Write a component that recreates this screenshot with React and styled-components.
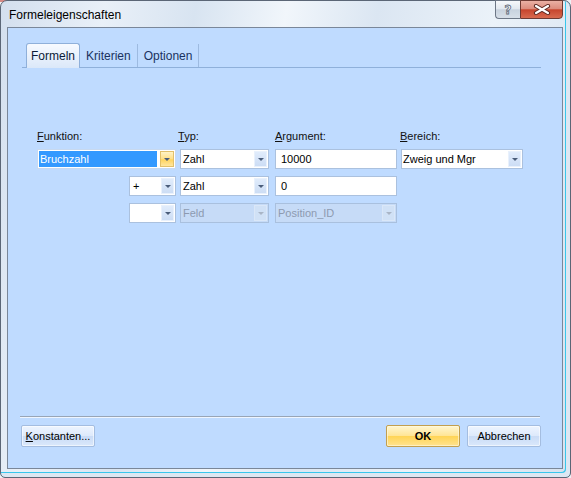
import React from 'react';
import styled, { createGlobalStyle, css } from 'styled-components';

const Global = createGlobalStyle`
  html, body { margin: 0; padding: 0; }
  body {
    width: 571px; height: 478px; overflow: hidden;
    background: linear-gradient(#d68a86, #d68a86) 0 0 / 190px 2px no-repeat, #eef1f5;
    font-family: "Liberation Sans", Arial, sans-serif;
  }
  * { box-sizing: border-box; }
`;

const Window = styled.div`
  width: 571px; height: 478px;
  border: 1px solid #5b6676;
  border-radius: 7px 7px 5px 5px;
  background: linear-gradient(100deg, #d3dfee 0%, #e9f0f8 16%, #d8e4f1 30%, #f1f6fb 44%, #dbe6f2 58%, #ebf2f9 76%, #d6e2ef 100%);
  box-shadow: inset -4px -4px 0 0 #dde7f2, inset -5px -5px 0 0 #38c6ec;
  display: flex;
  flex-direction: column;
`;

const TitleBar = styled.div`
  height: 26px;
  display: flex;
  align-items: flex-start;
`;

const Title = styled.div`
  flex: 1;
  padding: 7px 0 0 8px;
  font-size: 12px;
  line-height: 15px;
  color: #000;
`;

const CaptionButtons = styled.div`
  display: flex;
  margin: -1px 7px 0 0;
`;

const HelpButton = styled.div`
  width: 25px; height: 19px;
  border: 1px solid #6d7786;
  border-right: none;
  border-radius: 0 0 0 4px;
  background: linear-gradient(#f6f8fb, #e2e8ef 45%, #c8d2de 52%, #d7dfe8);
  display: flex; align-items: center; justify-content: center;
  font-family: "DejaVu Sans", sans-serif;
  font-weight: bold;
  font-size: 12px;
  color: #fdfdfd;
  -webkit-text-stroke: 0.8px #5d6878;
`;

const CloseButton = styled.div`
  width: 43px; height: 19px;
  border: 1px solid #6e3a33;
  border-radius: 0 0 4px 0;
  background: linear-gradient(#eab0a4, #dc8d7e 45%, #c7452d 52%, #d86a4f);
  display: flex; align-items: center; justify-content: center;
`;

const Client = styled.div`
  flex: 1;
  margin: 0 7px 8px 6px;
  border: 1px solid #7a8799;
  background: #bfdbff;
  display: flex;
  flex-direction: column;
`;

const TabStrip = styled.div`
  margin: 15px 21px 0 14px;
  height: 25px;
  padding-left: 4px;
  border-bottom: 1px solid #8fb0da;
  display: flex;
`;

const Tab = styled.div`
  padding: 0 6px;
  font-size: 12px;
  display: flex;
  align-items: center;
  color: #1a3260;
  border-right: 1px solid #9dbae0;
  margin-top: 1px;
  ${(p) => p.$active && css`
    padding: 0 4px;
    margin-top: 0;
    color: #0b1a38;
    border: 1px solid #8fb0da;
    border-bottom: none;
    border-radius: 3px 3px 0 0;
    background: linear-gradient(#f7faff, #dbe8f9);
    margin-bottom: -1px;
  `}
`;

const Body = styled.div`
  flex: 1;
  padding: 62px 0 0 29px;
`;

const FormGrid = styled.div`
  display: grid;
  grid-template-columns: 143px 95px 126px 122px;
  grid-template-rows: 12px 20px 20px 20px;
  row-gap: 7px;
`;

const Label = styled.div`
  font-size: 11px;
  line-height: 12px;
  color: #111;
  margin-left: ${(p) => p.$shift || 0}px;
  u { text-decoration-thickness: 1px; text-underline-offset: 1px; }
`;

const RightCell = styled.div`
  width: 139px;
  display: flex;
  justify-content: flex-end;
`;

const Combo = styled.div`
  width: ${(p) => p.$w}px;
  height: 20px;
  display: flex;
  border: 1px solid #abc1de;
  background: #fff;
  ${(p) => p.$disabled && css`
    border-color: #a9c0de;
    background: #c6dbf7;
  `}
  ${(p) => p.$focused && css`
    border-color: #c8d9ef;
    padding: 1px;
  `}
`;

const ComboText = styled.div`
  flex: 1;
  padding-left: ${(p) => (p.$pad != null ? p.$pad : 2)}px;
  font-size: 11px;
  line-height: 18px;
  color: ${(p) => (p.$disabled ? '#8d9ab0' : '#000')};
  white-space: nowrap;
  ${(p) => p.$selected && css`
    background: #3399ff;
    color: #fff;
    line-height: 16px;
    padding-left: 1px;
  `}
`;

const ComboArrow = styled.div`
  width: 13px;
  margin: 1px;
  background: linear-gradient(#e2edfc, #cbdcf4);
  box-shadow: inset 0 0 0 1px #e9f1fc;
  display: flex;
  align-items: center;
  justify-content: center;
  ${(p) => p.$hot && css`
    margin: 0 0 0 3px;
    width: 14px;
    background: linear-gradient(#fff3c6, #ffdf86 50%, #ffd45e 55%, #ffe6a0);
    border: 1px solid #e2c06a;
    box-shadow: none;
  `}
  ${(p) => p.$disabled && css`
    background: #d0e1f6;
    box-shadow: inset 0 0 0 1px #dae7f8;
  `}
`;

const Triangle = styled.span`
  width: 0; height: 0;
  margin-top: 1px;
  border-left: 3px solid transparent;
  border-right: 3px solid transparent;
  border-top: 3px solid ${(p) => (p.$disabled ? '#a9b5c6' : '#4a5d7a')};
`;

const Input = styled.input`
  width: ${(p) => p.$w}px;
  height: 20px;
  margin: 0;
  border: 1px solid #abc1de;
  background: #fff;
  padding: 0 0 0 5px;
  font-family: "Liberation Sans", Arial, sans-serif;
  font-size: 11px;
  color: #000;
  outline: none;
`;

const Separator = styled.div`
  margin: 0 22px 0 12px;
  border-top: 1px solid #98a5b6;
  border-bottom: 1px solid #eef5ff;
`;

const ButtonRow = styled.div`
  display: flex;
  justify-content: space-between;
  padding: 7px 21px 21px 13px;
`;

const ButtonGroup = styled.div`
  display: flex;
  gap: 7px;
`;

const Button = styled.div`
  width: ${(p) => p.$w || 74}px;
  height: 22px;
  border: 1px solid #a4bde0;
  border-radius: 2px;
  background: linear-gradient(#eef5ff, #dde9fb 50%, #cadcf6 52%, #dae8fb);
  box-shadow: inset 0 0 0 1px rgba(255,255,255,0.55);
  display: flex;
  align-items: center;
  justify-content: center;
  font-size: 11px;
  color: #000;
  u { text-decoration-thickness: 1px; text-underline-offset: 1px; }
  ${(p) => p.$primary && css`
    border-color: #c29f4f;
    background: linear-gradient(#fff6d0, #ffe596 48%, #ffd456 52%, #ffe390);
    font-weight: bold;
    box-shadow: inset 0 0 0 1px rgba(255,250,225,0.6);
  `}
`;

function Dropdown({ w, value, disabled, focused, pad }) {
  return (
    <Combo $w={w} $disabled={disabled} $focused={focused}>
      <ComboText $disabled={disabled} $selected={focused} $pad={pad}>{value}</ComboText>
      <ComboArrow $hot={focused} $disabled={disabled}>
        <Triangle $disabled={disabled} />
      </ComboArrow>
    </Combo>
  );
}

export default function App() {
  return (
    <>
      <Global />
      <Window>
        <TitleBar>
          <Title>Formeleigenschaften</Title>
          <CaptionButtons>
            <HelpButton>?</HelpButton>
            <CloseButton>
              <svg width="18" height="11" viewBox="0 0 18 11">
                <path d="M3 2 L15 9 M15 2 L3 9" stroke="#5b2720" strokeWidth="4.2" strokeLinecap="round" />
                <path d="M3 2 L15 9 M15 2 L3 9" stroke="#ffffff" strokeWidth="2.2" strokeLinecap="round" />
              </svg>
            </CloseButton>
          </CaptionButtons>
        </TitleBar>
        <Client>
          <TabStrip>
            <Tab $active>Formeln</Tab>
            <Tab>Kriterien</Tab>
            <Tab>Optionen</Tab>
          </TabStrip>
          <Body>
            <FormGrid>
              <Label><u>F</u>unktion:</Label>
              <Label $shift={-2}><u>T</u>yp:</Label>
              <Label><u>A</u>rgument:</Label>
              <Label $shift={-1}><u>B</u>ereich:</Label>

              <Dropdown w={139} value="Bruchzahl" focused />
              <Dropdown w={89} value="Zahl" />
              <Input $w={122} defaultValue="10000" />
              <Dropdown w={122} value="Zweig und Mgr" pad={1} />

              <RightCell><Dropdown w={47} value="+" pad={3} /></RightCell>
              <Dropdown w={89} value="Zahl" />
              <Input $w={122} defaultValue="0" />
              <div />

              <RightCell><Dropdown w={47} value="" /></RightCell>
              <Dropdown w={89} value="Feld" disabled />
              <Dropdown w={122} value="Position_ID" disabled />
              <div />
            </FormGrid>
          </Body>
          <Separator />
          <ButtonRow>
            <Button $w={74}><u>K</u>onstanten...</Button>
            <ButtonGroup>
              <Button $primary $w={74}>OK</Button>
              <Button $w={74}>Abbrechen</Button>
            </ButtonGroup>
          </ButtonRow>
        </Client>
      </Window>
    </>
  );
}
